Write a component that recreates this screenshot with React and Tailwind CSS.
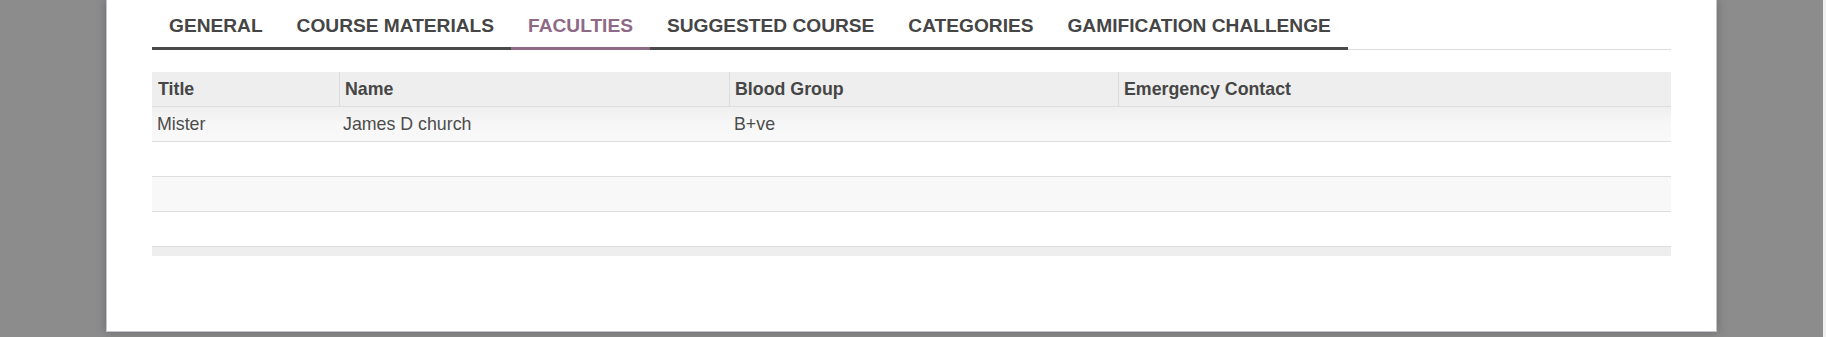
import React from "react";

const tabs = [
  "General",
  "Course Materials",
  "Faculties",
  "Suggested Course",
  "Categories",
  "Gamification Challenge",
];

function Tabs() {
  return (
    <ul className="flex border-b border-[#dedede]">
      {tabs.map((t) => {
        const active = t === "Faculties";
        return (
          <li
            key={t}
            className={
              active
                ? "-mb-px border-b-[3px] border-[#8f6a87] px-[17px] pt-[12px] pb-[7px] leading-[28px] text-[19.15px] font-bold uppercase text-[#8f6a87]"
                : "-mb-px border-b-[3px] border-[#4a4a4a] px-[17px] pt-[12px] pb-[7px] leading-[28px] text-[19.15px] font-bold uppercase text-[#454545]"
            }
          >
            {t}
          </li>
        );
      })}
    </ul>
  );
}

function Table() {
  return (
    <div className="mt-[22px] text-[17.8px] text-[#4c4c4c]">
      <div className="flex h-[35px] items-center border-b border-[#dedede] bg-[#eeeeee] font-bold text-[#464646]">
        <div className="flex h-full w-[187px] items-center pl-[6px]">Title</div>
        <div className="flex h-full w-[390px] items-center border-l border-[#dcdcdc] pl-[5px]">Name</div>
        <div className="flex h-full w-[389px] items-center border-l border-[#dcdcdc] pl-[5px]">Blood Group</div>
        <div className="flex h-full flex-1 items-center border-l border-[#dcdcdc] pl-[5px]">Emergency Contact</div>
      </div>
      <div className="flex h-[35px] items-center border-b border-[#dedede] bg-linear-to-b from-[#efefef] via-[#f7f7f7] to-[#f9f9f9]">
        <div className="w-[187px] pl-[5px]">Mister</div>
        <div className="w-[390px] pl-[4px]">James D church</div>
        <div className="w-[389px] pl-[5px]">B+ve</div>
        <div className="flex-1"></div>
      </div>
      <div className="h-[35px] border-b border-[#dedede] bg-white"></div>
      <div className="h-[35px] border-b border-[#dedede] bg-[#f8f8f8]"></div>
      <div className="h-[35px] border-b border-[#dedede] bg-white"></div>
      <div className="h-[9px] bg-[#eeeeee]"></div>
    </div>
  );
}

export default function App() {
  return (
    <div
      className="flex h-[337px] w-[1826px] overflow-hidden bg-[#8c8c8c]"
      style={{ fontFamily: '"Liberation Sans", Arial, sans-serif' }}
    >
      <div className="ml-[106px] h-[332px] w-[1611px] shrink-0 border-x border-b border-[#c6c3cf] bg-white px-[45px] shadow-[0_0_10px_rgba(0,0,0,0.25)]">
        <Tabs />
        <Table />
      </div>
      <div className="flex-1"></div>
      <div className="h-full w-[3px] bg-[#f0f0f0]"></div>
    </div>
  );
}
